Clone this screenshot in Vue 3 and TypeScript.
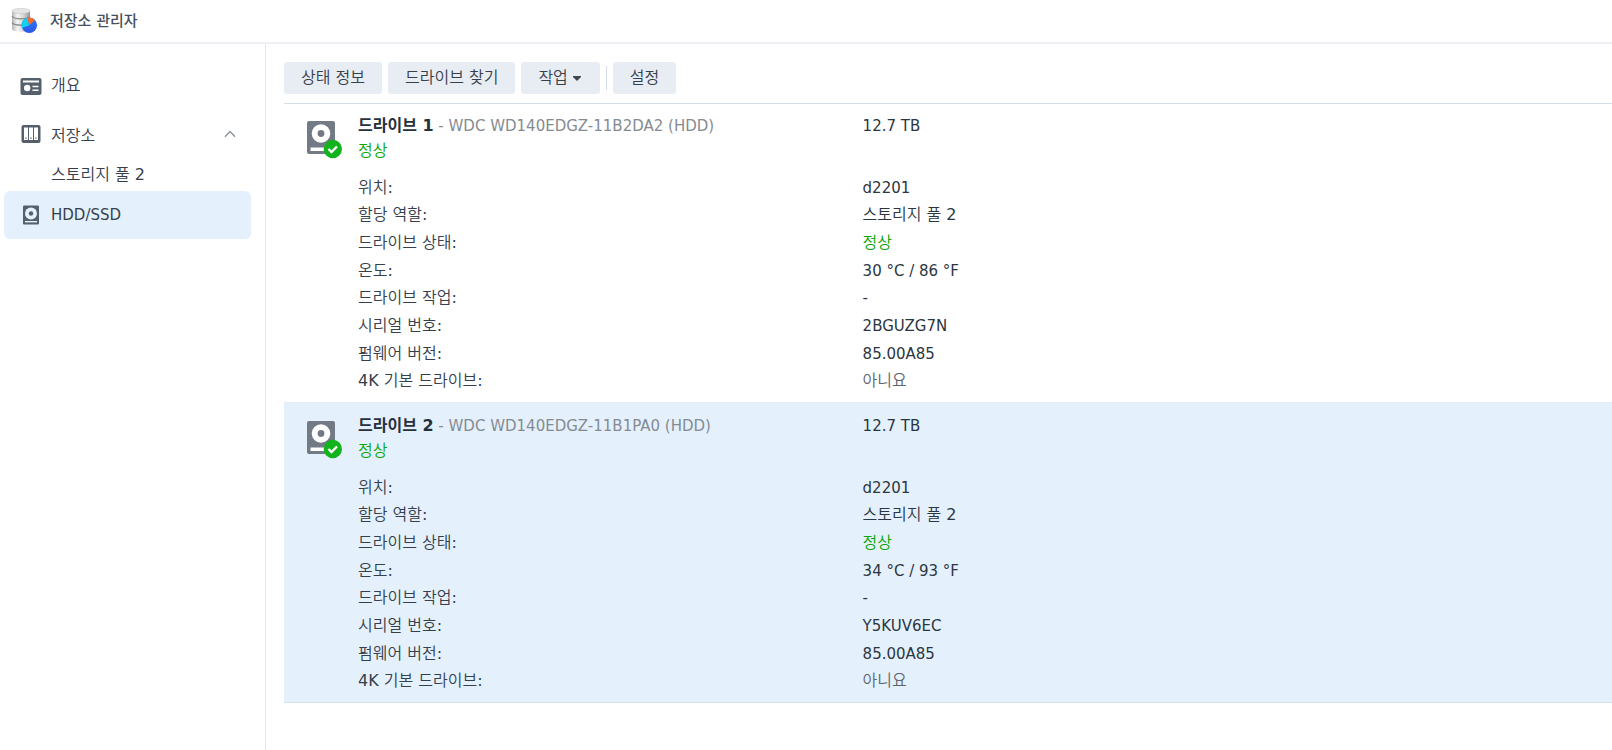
<script setup lang="ts">
interface Field {
  label: string
  value: string
  korean?: boolean
  ok?: boolean
  muted?: boolean
}

interface Drive {
  id: number
  model: string
  capacity: string
  selected: boolean
  fields: Field[]
}

function fieldsFor(temperature: string, serial: string): Field[] {
  return [
    { label: '위치:', value: 'd2201' },
    { label: '할당 역할:', value: '스토리지 풀 2', korean: true },
    { label: '드라이브 상태:', value: '정상', korean: true, ok: true },
    { label: '온도:', value: temperature },
    { label: '드라이브 작업:', value: '-' },
    { label: '시리얼 번호:', value: serial },
    { label: '펌웨어 버전:', value: '85.00A85' },
    { label: '4K 기본 드라이브:', value: '아니요', korean: true, muted: true },
  ]
}

const drives: Drive[] = [
  {
    id: 1,
    model: 'WDC WD140EDGZ-11B2DA2 (HDD)',
    capacity: '12.7 TB',
    selected: false,
    fields: fieldsFor('30 °C / 86 °F', '2BGUZG7N'),
  },
  {
    id: 2,
    model: 'WDC WD140EDGZ-11B1PA0 (HDD)',
    capacity: '12.7 TB',
    selected: true,
    fields: fieldsFor('34 °C / 93 °F', 'Y5KUV6EC'),
  },
]
</script>

<template>
  <div class="app">
    <header class="titlebar">
      <svg class="logo" width="28" height="28" viewBox="0 0 28 28" aria-hidden="true">
        <defs>
          <linearGradient id="metal" x1="0" x2="1" y1="0" y2="0">
            <stop offset="0" stop-color="#b4b4b4" />
            <stop offset="0.3" stop-color="#f4f4f4" />
            <stop offset="0.65" stop-color="#d4d4d4" />
            <stop offset="1" stop-color="#949494" />
          </linearGradient>
          <linearGradient id="pie" x1="0" x2="0" y1="0" y2="1">
            <stop offset="0" stop-color="#2f7df6" />
            <stop offset="1" stop-color="#2a56e8" />
          </linearGradient>
        </defs>
        <path d="M2 4v18c0 1.700 4 2.800 9 2.800s9-1.100 9-2.800V4z" fill="url(#metal)" />
        <path d="M2 9.300c1 1.800 5 2.500 9 2.500s8-.7 9-2.500M2 15.600c1 1.800 5 2.500 9 2.500s8-.7 9-2.500" fill="none" stroke="#888" stroke-width="1.200" />
        <ellipse cx="11" cy="4" rx="9" ry="2.600" fill="#e4e4e4" stroke="#c4c4c4" stroke-width=".6" />
        <circle cx="19.300" cy="18.300" r="7.800" fill="url(#pie)" />
        <path d="M19.300 18.300 17.600 10.700A7.800 7.800 0 0 0 12 21z" fill="#14d0ee" />
        <path d="M19.300 18.300 17.600 10.700A7.800 7.800 0 0 1 25 13z" fill="#ff6a1f" />
      </svg>
      <h1>저장소 관리자</h1>
    </header>

    <div class="body">
      <nav class="sidebar">
        <a class="item" href="#overview">
          <svg width="22" height="22" viewBox="0 0 22 22" aria-hidden="true">
            <rect x="0.500" y="3" width="21" height="17" rx="2" fill="#56606c" />
            <path d="M3 5.500h16v2H3z" fill="#fff" />
            <circle cx="7.200" cy="13" r="3.200" fill="#fff" />
            <path d="M12.500 10.700h6v1.600h-6zM12.500 14.500h6v1.600h-6z" fill="#fff" />
          </svg>
          <span class="ko">개요</span>
        </a>
        <button class="item" type="button" aria-expanded="true">
          <svg width="22" height="22" viewBox="0 0 22 22" aria-hidden="true">
            <rect x="1.500" y="2" width="19" height="18" rx="2" fill="#56606c" />
            <path d="M4 4.500h4V17H4zM9 4.500h4V17H9zM14 4.500h4V17h-4z" fill="#fff" />
            <path d="M5.300 14.500h1.300v1.300H5.300zM10.300 14.500h1.300v1.300h-1.300zM15.300 14.500h1.300v1.300h-1.300z" fill="#56606c" />
          </svg>
          <span class="ko">저장소</span>
          <svg class="chevron" width="12" height="8" viewBox="0 0 12 8" aria-hidden="true">
            <path d="M1 6.800 6 1.500l5 5.300" fill="none" stroke="#8a9097" stroke-width="1.300" />
          </svg>
        </button>
        <a class="item sub ko" href="#pool">스토리지 풀 2</a>
        <a class="item active" href="#drives" aria-current="page">
          <svg width="22" height="22" viewBox="0 0 22 22" aria-hidden="true">
            <rect x="3" y="1.500" width="16" height="19" rx="1" fill="#56606c" />
            <circle cx="11" cy="9.500" r="6" fill="#e4f1fd" />
            <circle cx="11" cy="9.500" r="2.200" fill="#56606c" />
            <path d="M5 17h12v1.400H5z" fill="#e4f1fd" />
          </svg>
          <span>HDD/SSD</span>
        </a>
      </nav>

      <main class="content">
        <div class="toolbar" role="toolbar">
          <button type="button">상태 정보</button>
          <button type="button">드라이브 찾기</button>
          <button type="button" aria-haspopup="menu">
            작업
            <svg class="caret" width="8" height="5" viewBox="0 0 8 5" aria-hidden="true">
              <path d="M0 0h8v1L4 5 0 1z" fill="#3f4954" />
            </svg>
          </button>
          <span class="divider"></span>
          <button type="button">설정</button>
        </div>

        <section class="drives">
          <article v-for="drive in drives" :key="drive.id" class="drive" :class="{ selected: drive.selected }">
            <div class="drive-icon">
              <svg width="36" height="38" viewBox="0 0 36 38" aria-hidden="true">
                <rect x="0" y="0" width="28" height="33" rx="2" fill="#727b85" />
                <circle cx="14" cy="12.500" r="9.300" fill="#fff" />
                <circle cx="14" cy="12.500" r="3.400" fill="#727b85" />
                <path d="M3.500 26.500H18V30H3.500z" fill="#fff" />
                <circle cx="25.800" cy="28" r="9.200" fill="#12b31c" />
                <path d="m21.500 28 3 3 5.500-5.500" fill="none" stroke="#fff" stroke-width="2.400" />
              </svg>
            </div>
            <div class="drive-info">
              <div class="row">
                <h2><strong>드라이브 {{ drive.id }}</strong> - {{ drive.model }}</h2>
                <span>{{ drive.capacity }}</span>
              </div>
              <p class="status ko">정상</p>
              <dl>
                <div v-for="field in drive.fields" :key="field.label" class="row">
                  <dt class="ko">{{ field.label }}</dt>
                  <dd :class="{ ko: field.korean, ok: field.ok, muted: field.muted }">{{ field.value }}</dd>
                </div>
              </dl>
            </div>
          </article>
        </section>
      </main>
    </div>
  </div>
</template>

<style>
body {
  margin: 0;
  background: #fff;
}
</style>

<style scoped>
.app {
  display: flex;
  flex-direction: column;
  min-height: 100vh;
  font-family: "DejaVu Sans", "Noto Sans CJK KR DemiLight", "Noto Sans CJK KR Light", "Noto Sans CJK KR", sans-serif;
  font-size: 15px;
  line-height: 24px;
  color: #2c3642;
}

.ko {
  font-size: 16px;
}

.titlebar {
  display: flex;
  align-items: center;
  gap: 12px;
  height: 42px;
  padding: 0 10px;
  border-bottom: 2px solid #eef0f6;
}

.logo {
  flex: none;
}

h1 {
  margin: 0;
  font-family: "DejaVu Sans", "Noto Sans CJK KR", sans-serif;
  font-size: 15px;
  font-weight: 500;
  color: #46505c;
}

.body {
  display: flex;
  flex: 1;
}

.sidebar {
  box-sizing: border-box;
  flex: none;
  display: flex;
  flex-direction: column;
  width: 266px;
  padding: 18px 14px 0 4px;
  border-right: 1px solid #e2e6ed;
}

.item {
  display: flex;
  align-items: center;
  gap: 9px;
  box-sizing: border-box;
  height: 48px;
  padding: 0 15px 0 16px;
  border: 0;
  border-radius: 6px;
  background: none;
  font-family: inherit;
  color: #35404c;
  text-align: left;
  text-decoration: none;
  cursor: pointer;
}

.item.sub {
  height: 33px;
  padding-left: 47px;
}

.item.active {
  background: #e4f1fd;
}

.chevron {
  margin-left: auto;
}

.content {
  flex: 1;
  min-width: 0;
  padding: 18px 0 48px 18px;
}

.toolbar {
  display: flex;
  align-items: center;
  gap: 6px;
  padding-bottom: 9px;
  border-bottom: 1px solid #d3dde9;
}

.toolbar button {
  display: flex;
  align-items: center;
  gap: 5px;
  height: 32px;
  padding: 0 17px;
  border: 0;
  border-radius: 3px;
  background: #e8edf4;
  font-family: inherit;
  font-size: 16px;
  line-height: 24px;
  color: #35404c;
  cursor: pointer;
}

.caret {
  margin-right: 2px;
}

.divider {
  width: 1px;
  height: 24px;
  background: #d3dde9;
}

.drive {
  display: flex;
  padding: 10px 0 7px;
}

.drive.selected {
  padding-top: 11px;
  background: #e4f1fd;
  border-top: 1px solid #e1edf8;
  border-bottom: 1px solid #d5e2ee;
}

.drive-icon {
  flex: none;
  width: 51px;
  padding: 7px 0 0 23px;
}

.drive-info {
  flex: 1;
  min-width: 0;
}

.row {
  display: grid;
  grid-template-columns: 101fr 150fr;
  align-items: center;
}

h2 {
  margin: 0;
  font-size: 15px;
  font-weight: 400;
  line-height: 24px;
  color: #858b92;
}

h2 strong {
  font-family: "DejaVu Sans", "Noto Sans CJK KR", sans-serif;
  font-size: 16px;
  font-weight: 600;
  color: #27313d;
}

.status {
  margin: 0;
  line-height: 25px;
  color: #0aa80a;
}

dl {
  display: grid;
  grid-auto-rows: 1fr;
  height: 221px;
  margin: 11px 0 0;
}

dt {
  color: #35404c;
}

dd {
  margin: 0;
}

.ok {
  color: #0aa80a;
}

.muted {
  color: #5c6570;
}
</style>
